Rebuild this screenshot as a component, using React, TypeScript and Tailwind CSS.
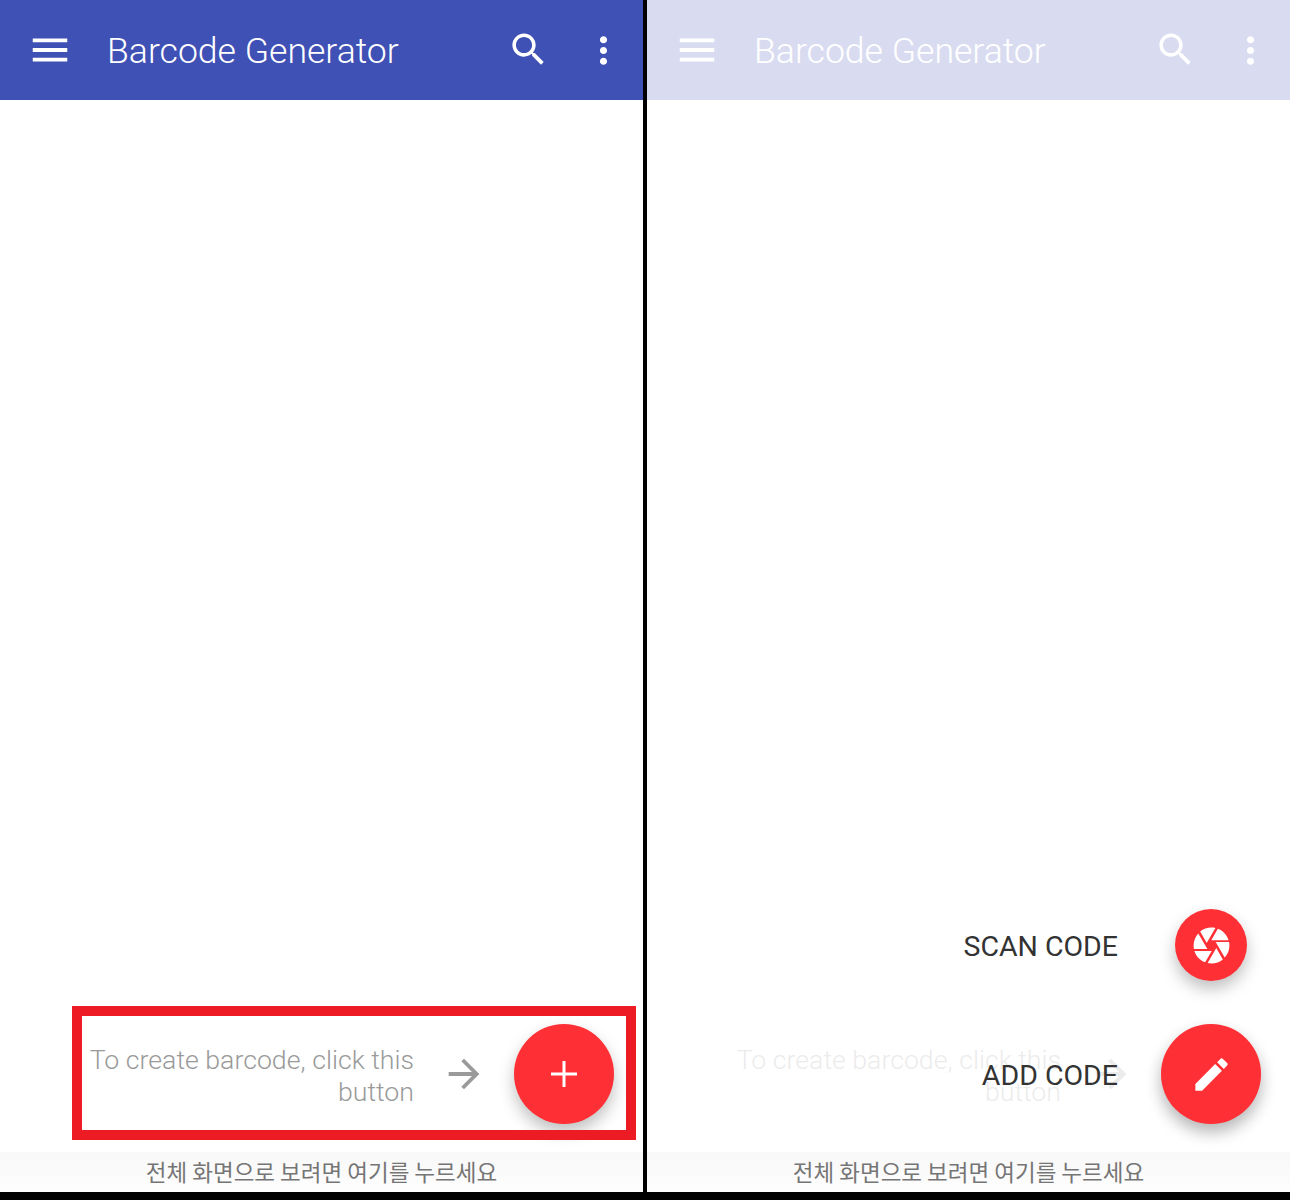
/*
 * Barcode Generator: empty state and expanded FAB menu, side by side.
 */
const roboto = "font-['Roboto','Liberation_Sans',sans-serif]";

function Icon({ d, size, className }: { d: string; size: number; className?: string }) {
  return (
    <svg width={size} height={size} viewBox="0 0 24 24" fill="currentColor" className={className}>
      <path d={d} />
    </svg>
  );
}

const MENU = "M3 18h18v-2H3v2zm0-5h18v-2H3v2zm0-5h18V6H3v2z";
const SEARCH =
  "M15.5 14h-.79l-.28-.27C15.41 12.59 16 11.11 16 9.5 16 5.91 13.09 3 9.5 3S3 5.91 3 9.5 5.91 16 9.5 16c1.61 0 3.09-.59 4.23-1.57l.27.28v.79l5 4.99L20.49 19l-4.99-5zm-6 0C7.01 14 5 11.99 5 9.5S7.01 5 9.5 5 14 7.01 14 9.5 11.99 14 9.5 14z";
const MORE =
  "M12 8c1.1 0 2-.9 2-2s-.9-2-2-2-2 .9-2 2 .9 2 2 2zm0 2c-1.1 0-2 .9-2 2s.9 2 2 2 2-.9 2-2-.9-2-2-2zm0 6c-1.1 0-2 .9-2 2s.9 2 2 2 2-.9 2-2-.9-2-2-2z";
const ARROW = "M12 4l-1.41 1.41L16.17 11H4v2h12.17l-5.58 5.59L12 20l8-8z";
const PENCIL =
  "M3 17.25V21h3.75L17.81 9.94l-3.75-3.75L3 17.25zM20.71 7.04c.39-.39.39-1.02 0-1.41l-2.34-2.34c-.39-.39-1.02-.39-1.41 0l-1.83 1.83 3.75 3.75 1.83-1.83z";
const SHUTTER =
  "M9.4 10.5l4.77-8.26C13.47 2.09 12.75 2 12 2c-2.4 0-4.6.85-6.32 2.25l3.66 6.35.06-.1zM21.54 9c-.92-2.92-3.15-5.26-6-6.34L11.88 9h9.66zm.26 1h-7.49l.29.5 4.76 8.25C21 16.97 22 14.61 22 12c0-.69-.07-1.35-.2-2zM8.54 12l-3.9-6.75C3.01 7.03 2 9.39 2 12c0 .69.07 1.35.2 2h7.49l-1.15-2zm-6.08 3c.92 2.92 3.15 5.26 6 6.34L12.12 15H2.46zm11.27 0l-3.9 6.76c.7.15 1.42.24 2.17.24 2.4 0 4.6-.85 6.32-2.25l-3.66-6.35-.93 1.6z";

function Fab({ small, children }: { small?: boolean; children: React.ReactNode }) {
  return (
    <div
      className={`flex items-center justify-center rounded-full bg-[#ff3035] text-white shadow-[0_8px_16px_rgba(0,0,0,0.25)] ${
        small ? "h-[72px] w-[72px]" : "h-[100px] w-[100px]"
      }`}
    >
      {children}
    </div>
  );
}

function Panel({ children, dimmed }: { children?: React.ReactNode; dimmed?: boolean }) {
  return (
    <div className={`relative flex h-full flex-1 flex-col ${roboto}`}>
      {/* Toolbar */}
      <header className="flex h-[100px] shrink-0 items-center bg-[#3f51b5] pl-[27px] text-white">
        <Icon d={MENU} size={46} />
        <h1 className="mt-[3px] ml-[34px] flex-1 text-[35.6px] leading-none font-light">Barcode Generator</h1>
        <Icon d={SEARCH} size={43} className="mb-[1px]" />
        <Icon d={MORE} size={43} className="mr-[18px] ml-[32px]" />
      </header>

      {/* Empty state hint */}
      <main className="flex flex-1 items-end justify-end bg-white pr-[29px] pb-[28px]">
        <div className="flex h-[100px] items-center">
          <p className="mt-[3px] text-right text-[26.7px] leading-[32px] font-light whitespace-nowrap text-[#9a9a9a]">
            To create barcode, click this
            <br />
            button
          </p>
          <Icon d={ARROW} size={46} className="ml-[27px] text-[#9a9a9a]" />
          <div className="ml-[27px]">
            <Fab>
              <svg width="26" height="26" viewBox="0 0 26 26" stroke="currentColor" strokeWidth="3">
                <path d="M13 0v26M0 13h26" />
              </svg>
            </Fab>
          </div>
        </div>
      </main>

      {dimmed && <div className="absolute inset-x-0 top-0 bottom-10 bg-white/80" />}

      {/* Bottom notice */}
      <footer className="relative flex h-10 shrink-0 items-center justify-center bg-gradient-to-b from-[#f8f8f8] to-[#fdfdfd] font-['Noto_Sans_CJK_KR',sans-serif] text-[22.5px] text-[#757575]">
        전체 화면으로 보려면 여기를 누르세요
      </footer>

      {children}
    </div>
  );
}

function FabMenu() {
  return (
    <div className="absolute right-[29px] bottom-[68px] flex flex-col items-end gap-[43px] text-[28.5px] leading-none text-[#333333]">
      <div className="flex items-center">
        <span className="mt-[5px] mr-[57px]">SCAN CODE</span>
        <div className="mr-[14px]">
          <Fab small>
            <Icon d={SHUTTER} size={43} />
          </Fab>
        </div>
      </div>
      <div className="flex items-center">
        <span className="mt-[5px] mr-[43px]">ADD CODE</span>
        <Fab>
          <Icon d={PENCIL} size={43} />
        </Fab>
      </div>
    </div>
  );
}

export default function App() {
  return (
    <div className="flex h-[1200px] w-[1290px] flex-col overflow-hidden bg-black">
      <div className="flex h-[1192px] gap-1">
        <Panel>
          {/* Red callout round the hint */}
          <div className="absolute top-[1006px] left-[72px] h-[134px] w-[564px] border-[10px] border-[#ed1c24]" />
        </Panel>
        <Panel dimmed>
          <FabMenu />
        </Panel>
      </div>
    </div>
  );
}
